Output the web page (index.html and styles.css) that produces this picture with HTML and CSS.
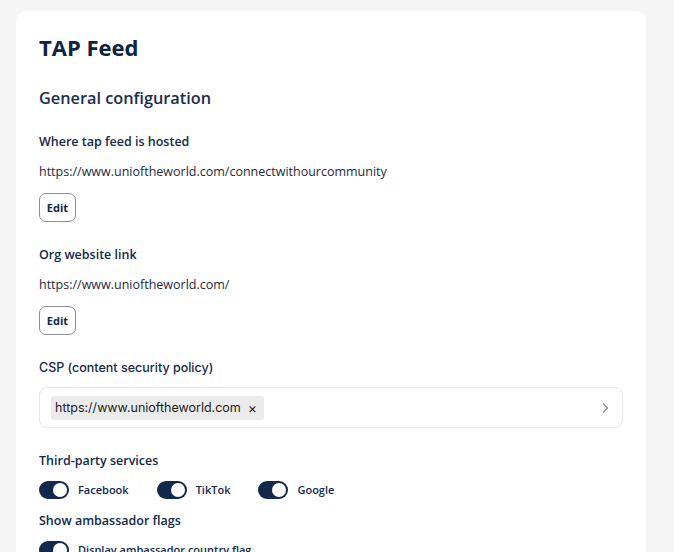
FILE: index.html
```html
<!DOCTYPE html>
<html>
<head>
<meta charset="utf-8">
<link rel="stylesheet" href="styles.css">
</head>
<body>
<main class="card">
  <h1 class="title">TAP Feed</h1>
  <h2 class="section">General configuration</h2>

  <div class="field">
    <div class="label">Where tap feed is hosted</div>
    <div class="value">https://www.unioftheworld.com/connectwithourcommunity</div>
    <button class="edit">Edit</button>
  </div>

  <div class="field">
    <div class="label">Org website link</div>
    <div class="value">https://www.unioftheworld.com/</div>
    <button class="edit">Edit</button>
  </div>

  <div class="field csp">
    <div class="label alt">CSP (content security policy)</div>
    <div class="select">
      <span class="chip">https://www.unioftheworld.com <span class="x">×</span></span>
      <svg class="chev" width="10" height="12" viewBox="0 0 10 12"><path d="M3 1.5 L7.5 6 L3 10.5" fill="none" stroke="#8a8f98" stroke-width="1.4"/></svg>
    </div>
  </div>

  <div class="label">Third-party services</div>
  <div class="toggles">
    <label class="tog"><span class="switch"><span class="knob"></span></span>Facebook</label>
    <label class="tog"><span class="switch"><span class="knob"></span></span>TikTok</label>
    <label class="tog"><span class="switch"><span class="knob"></span></span>Google</label>
  </div>

  <div class="label">Show ambassador flags</div>
  <div class="toggles">
    <label class="tog"><span class="switch"><span class="knob"></span></span>Display ambassador country flag</label>
  </div>
</main>
</body>
</html>
```

FILE: styles.css
```css
html, body { margin: 0; padding: 0; }
body {
  background: #f5f5f5;
  font-family: "Open Sans", "Liberation Sans", sans-serif;
  color: #13284a;
  padding: 11px 28px 0 16px;
  height: 552px;
  box-sizing: border-box;
  overflow: hidden;
}
.card {
  background: #fff;
  border-radius: 10px;
  padding: 22px 23px 40px 23px;
  width: 630px;
  box-sizing: border-box;
  min-height: 600px;
}
.title {
  margin: 0;
  font-size: 22px;
  font-weight: 700;
  line-height: 28px;
  color: #0f2342;
}
.section {
  margin: 26px 0 0 0;
  font-size: 16.3px;
  font-weight: 600;
  line-height: 22px;
  color: #1a2d4d;
}
.field { margin-top: 0; }
.label {
  font-size: 12.5px;
  font-weight: 600;
  line-height: 16px;
  margin-top: 14px;
}
.section + .field .label { margin-top: 25px; }
.value {
  font-size: 12.5px;
  line-height: 16px;
  margin-top: 14px;
  color: #1e2a3e;
}
.edit {
  display: block;
  margin-top: 13px;
  width: 37px;
  height: 29px;
  padding: 0;
  border: 1px solid #8a8d93;
  border-radius: 7px;
  background: #fff;
  font-family: inherit;
  font-weight: 700;
  font-size: 11px;
  color: #13284a;
}
.field + .field .label { margin-top: 25px; }
.csp .label { margin-top: 26px; }
.label.alt {
  font-family: Inter, "Liberation Sans", sans-serif;
  font-weight: 500;
  font-size: 12.5px;
}
.select {
  margin-top: 11px;
  height: 41px;
  border: 1px solid #e6e6e6;
  border-radius: 8px;
  display: flex;
  align-items: center;
  padding: 0 12px 0 11px;
  box-sizing: border-box;
}
.chip {
  background: #ebebeb;
  border-radius: 3px;
  height: 24px;
  display: inline-flex;
  align-items: center;
  padding: 0 7px 0 4px;
  font-family: Inter, "Liberation Sans", sans-serif;
  font-size: 12.5px;
  color: #1c1c1c;
}
.x { margin-left: 7px; font-size: 14px; }
.chev { margin-left: auto; }
.csp + .label { margin-top: 25px; }
.toggles {
  display: flex;
  margin-top: 12px;
}
.tog {
  display: flex;
  align-items: center;
  font-size: 11px;
  font-weight: 600;
  margin-right: 28px;
  line-height: 18px;
}
.switch {
  width: 30px;
  height: 18px;
  border-radius: 9px;
  background: #13284a;
  position: relative;
  margin-right: 9px;
  display: inline-block;
}
.knob {
  position: absolute;
  right: 2px;
  top: 2px;
  width: 14px;
  height: 14px;
  border-radius: 50%;
  background: #fff;
}
.toggles + .label { margin-top: 14px; }
```
